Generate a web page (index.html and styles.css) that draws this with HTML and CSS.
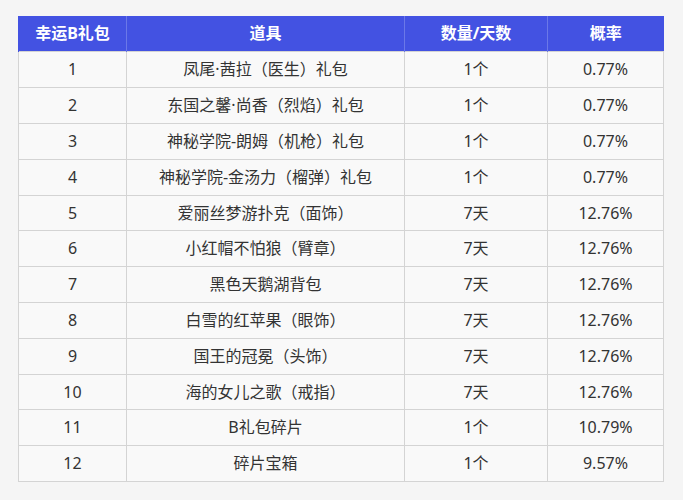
FILE: index.html
```html
<!DOCTYPE html>
<html lang="zh">
<head>
<meta charset="utf-8">
<link rel="stylesheet" href="styles.css">
</head>
<body>
<div class="page">
<table class="prize">
<colgroup>
<col class="c1"><col class="c2"><col class="c3"><col class="c4">
</colgroup>
<thead>
<tr><th>幸运B礼包</th><th>道具</th><th>数量/天数</th><th>概率</th></tr>
</thead>
<tbody>
<tr><td>1</td><td>凤尾·茜拉（医生）礼包</td><td>1个</td><td>0.77%</td></tr>
<tr><td>2</td><td>东国之馨·尚香（烈焰）礼包</td><td>1个</td><td>0.77%</td></tr>
<tr><td>3</td><td>神秘学院-朗姆（机枪）礼包</td><td>1个</td><td>0.77%</td></tr>
<tr><td>4</td><td>神秘学院-金汤力（榴弹）礼包</td><td>1个</td><td>0.77%</td></tr>
<tr class="short"><td>5</td><td>爱丽丝梦游扑克（面饰）</td><td>7天</td><td>12.76%</td></tr>
<tr><td>6</td><td>小红帽不怕狼（臂章）</td><td>7天</td><td>12.76%</td></tr>
<tr><td>7</td><td>黑色天鹅湖背包</td><td>7天</td><td>12.76%</td></tr>
<tr><td>8</td><td>白雪的红苹果（眼饰）</td><td>7天</td><td>12.76%</td></tr>
<tr><td>9</td><td>国王的冠冕（头饰）</td><td>7天</td><td>12.76%</td></tr>
<tr class="short"><td>10</td><td>海的女儿之歌（戒指）</td><td>7天</td><td>12.76%</td></tr>
<tr><td>11</td><td>B礼包碎片</td><td>1个</td><td>10.79%</td></tr>
<tr><td>12</td><td>碎片宝箱</td><td>1个</td><td>9.57%</td></tr>
</tbody>
</table>
</div>
</body>
</html>
```
FILE: styles.css
```css
html, body {
  margin: 0;
  padding: 0;
  background: #f5f5f5;
}
.page {
  width: 683px;
  height: 500px;
  padding: 16px 0 0 18px;
  box-sizing: border-box;
  font-family: "Noto Sans", "Noto Sans CJK SC", sans-serif;
}
.prize {
  border-collapse: collapse;
  width: 645px;
  table-layout: fixed;
  font-size: 16px;
  color: #333;
}
.c1 { width: 108px; }
.c2 { width: 278px; }
.c3 { width: 143px; }
.c4 { width: 116px; }
.prize thead tr { height: 35px; }
.prize tbody tr { height: 36px; }
.prize tbody tr.short { height: 35px; }
.prize th {
  background: #4352e2;
  color: #fff;
  font-weight: 700;
  padding: 0;
  border-left: 1px solid #6b78e8;
  text-align: center;
  line-height: 20px;
}
.prize th:first-child { border-left: 1px solid #4352e2; }
.prize td {
  background: #f9f9f9;
  border: 1px solid #d4d4d4;
  padding: 0;
  text-align: center;
  line-height: 20px;
}
```
